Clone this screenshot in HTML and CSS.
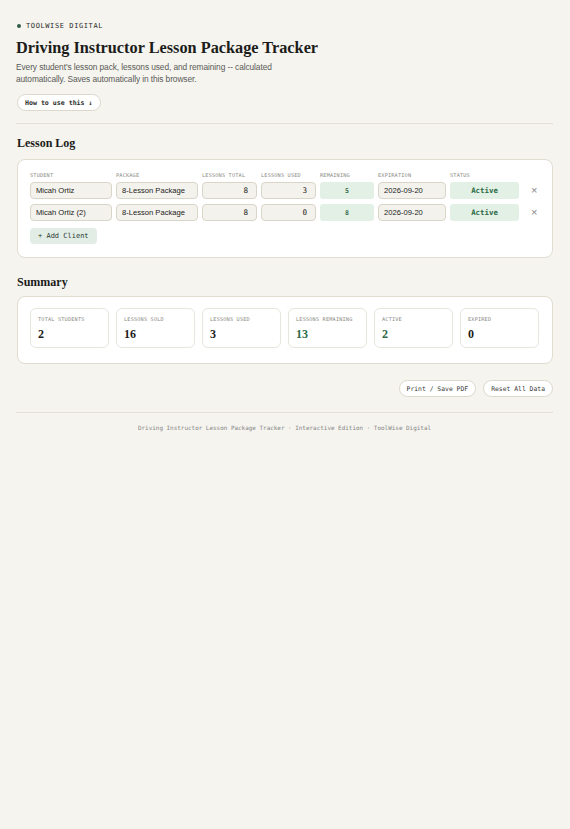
FILE: index.html
```html
<!DOCTYPE html>
<html lang="en">

<head>
    <meta charset="UTF-8">
    <meta name="viewport" content="width=device-width, initial-scale=1.0">
    <title>Driving Instructor Lesson Package Tracker</title>
    <link rel="stylesheet" href="styles.css">
</head>

<body>
    <div class="page">
        <header class="hero">
            <div class="eyebrow"><span class="dot"></span>TOOLWISE DIGITAL</div>
            <h1>Driving Instructor Lesson Package Tracker</h1>
            <p class="lede">Every student's lesson pack, lessons used, and remaining -- calculated automatically. Saves automatically in this browser.</p>
            <button class="pill-btn how-btn">How to use this ↓</button>
        </header>

        <section class="section">
            <h2>Lesson Log</h2>
            <div class="card log-card">
                <div class="log-grid">
                    <div class="col-label">Student</div>
                    <div class="col-label">Package</div>
                    <div class="col-label">Lessons Total</div>
                    <div class="col-label">Lessons Used</div>
                    <div class="col-label">Remaining</div>
                    <div class="col-label">Expiration</div>
                    <div class="col-label">Status</div>
                    <div></div>

                    <input class="field" type="text" value="Micah Ortiz">
                    <input class="field" type="text" value="8-Lesson Package">
                    <input class="field num" type="text" value="8">
                    <input class="field num" type="text" value="3">
                    <div class="chip">5</div>
                    <input class="field" type="text" value="2026-09-20">
                    <div class="chip status">Active</div>
                    <button class="remove">×</button>

                    <input class="field" type="text" value="Micah Ortiz (2)">
                    <input class="field" type="text" value="8-Lesson Package">
                    <input class="field num" type="text" value="8">
                    <input class="field num" type="text" value="0">
                    <div class="chip">8</div>
                    <input class="field" type="text" value="2026-09-20">
                    <div class="chip status">Active</div>
                    <button class="remove">×</button>
                </div>
                <button class="add-btn">+ Add Client</button>
            </div>
        </section>

        <section class="section">
            <h2>Summary</h2>
            <div class="card summary-card">
                <div class="stat">
                    <div class="stat-label">Total Students</div>
                    <div class="stat-value">2</div>
                </div>
                <div class="stat">
                    <div class="stat-label">Lessons Sold</div>
                    <div class="stat-value">16</div>
                </div>
                <div class="stat">
                    <div class="stat-label">Lessons Used</div>
                    <div class="stat-value">3</div>
                </div>
                <div class="stat">
                    <div class="stat-label">Lessons Remaining</div>
                    <div class="stat-value green">13</div>
                </div>
                <div class="stat">
                    <div class="stat-label">Active</div>
                    <div class="stat-value green">2</div>
                </div>
                <div class="stat">
                    <div class="stat-label">Expired</div>
                    <div class="stat-value">0</div>
                </div>
            </div>
        </section>

        <div class="actions">
            <button class="pill-btn">Print / Save PDF</button>
            <button class="pill-btn">Reset All Data</button>
        </div>

        <footer class="footer">
            Driving Instructor Lesson Package Tracker · Interactive Edition · ToolWise Digital
        </footer>
    </div>
</body>

</html>
```

FILE: styles.css
```css
* {
    margin: 0;
    padding: 0;
    box-sizing: border-box;
}

body {
    background: #f5f4ef;
    color: #1c1c1a;
    font-family: "Liberation Sans", Arial, sans-serif;
}

.page {
    padding: 22px 17px 40px 16px;
}

.eyebrow {
    display: flex;
    align-items: center;
    gap: 5px;
    font-family: "DejaVu Sans Mono", monospace;
    font-size: 7px;
    letter-spacing: 0.6px;
    color: #2c2c2a;
    margin-left: 1px;
}

.dot {
    width: 4px;
    height: 4px;
    border-radius: 50%;
    background: #2f5d45;
}

h1 {
    font-family: "Liberation Serif", "Times New Roman", serif;
    font-size: 16.3px;
    font-weight: bold;
    margin-top: 8px;
}

.lede {
    font-size: 8.4px;
    letter-spacing: -0.1px;
    line-height: 12px;
    color: #5a5a56;
    max-width: 262px;
    margin-top: 3px;
}

.pill-btn {
    font-family: "DejaVu Sans Mono", monospace;
    font-size: 6.4px;
    color: #3a3a38;
    background: #fff;
    border: 1px solid #dcd8cc;
    border-radius: 9px;
    height: 17px;
    padding: 0 7px;
    cursor: pointer;
}

.how-btn {
    font-size: 6.6px;
    font-weight: bold;
    color: #2a2a28;
    margin-top: 9px;
    margin-left: 1px;
}

.section {
    border-top: 1px solid #e2dfd6;
    margin-top: 12px;
    padding-top: 12px;
}

.section + .section {
    border-top: none;
    margin-top: 17px;
    padding-top: 0;
}

h2 {
    font-family: "Liberation Serif", "Times New Roman", serif;
    font-size: 12px;
    font-weight: bold;
    margin-left: 1px;
    margin-bottom: 8px;
}

.section + .section h2 {
    margin-bottom: 6px;
}

.card {
    background: #fff;
    border: 1px solid #e0dccf;
    border-radius: 8px;
    margin-left: 1px;
}

.log-card {
    padding: 12px 13px 13px 12px;
}

.log-grid {
    display: grid;
    grid-template-columns: 82px 82px 55px 55px 54px 68px 69px 1fr;
    column-gap: 4px;
    row-gap: 5px;
    align-items: center;
}

.col-label {
    font-family: "DejaVu Sans Mono", monospace;
    font-size: 5.2px;
    color: #8a8a85;
    text-transform: uppercase;
    letter-spacing: 0.2px;
    margin-bottom: -1px;
    white-space: nowrap;
}

.field {
    width: 100%;
    height: 17px;
    background: #f4f2ec;
    border: 1px solid #d9d5c9;
    border-radius: 4px;
    padding: 0 5px;
    font-family: "Liberation Sans", Arial, sans-serif;
    font-size: 7.6px;
    color: #222;
    outline: none;
}

.field.num {
    font-family: "DejaVu Sans Mono", monospace;
    text-align: right;
    padding-right: 8px;
    font-size: 7.6px;
}

.chip {
    height: 17px;
    background: #e3f0e5;
    border-radius: 3px;
    display: flex;
    align-items: center;
    justify-content: center;
    font-family: "DejaVu Sans Mono", monospace;
    font-size: 6.5px;
    font-weight: bold;
    color: #2e6a47;
}

.chip.status {
    font-size: 7.4px;
    color: #2a6a44;
}

.remove {
    background: none;
    border: none;
    font-size: 11px;
    color: #888;
    cursor: pointer;
    justify-self: start;
    margin-left: 8px;
    line-height: 1;
}

.add-btn {
    margin-top: 7px;
    height: 16px;
    padding: 0 8px;
    font-family: "DejaVu Sans Mono", monospace;
    font-size: 7px;
    color: #2c3a32;
    background: #e2ede6;
    border: none;
    border-radius: 4px;
    cursor: pointer;
}

.summary-card {
    display: grid;
    grid-template-columns: repeat(6, 1fr);
    gap: 7px;
    padding: 11px 13px 15px 12px;
}

.stat {
    border: 1px solid #e8e5dc;
    border-radius: 6px;
    height: 40px;
    padding: 7px 7px;
}

.stat-label {
    font-family: "DejaVu Sans Mono", monospace;
    font-size: 5.2px;
    color: #8a8a85;
    text-transform: uppercase;
    letter-spacing: 0.2px;
    white-space: nowrap;
}

.stat-value {
    font-family: "Liberation Serif", "Times New Roman", serif;
    font-size: 12px;
    font-weight: bold;
    margin-top: 5px;
    color: #1c1c1a;
}

.stat-value.green {
    color: #2d6a47;
}

.actions {
    display: flex;
    justify-content: flex-end;
    gap: 7px;
    margin-top: 16px;
}

.footer {
    border-top: 1px solid #e2dfd6;
    margin-top: 15px;
    padding-top: 11px;
    text-align: center;
    font-family: "DejaVu Sans Mono", monospace;
    font-size: 5.95px;
    color: #888;
}
```
